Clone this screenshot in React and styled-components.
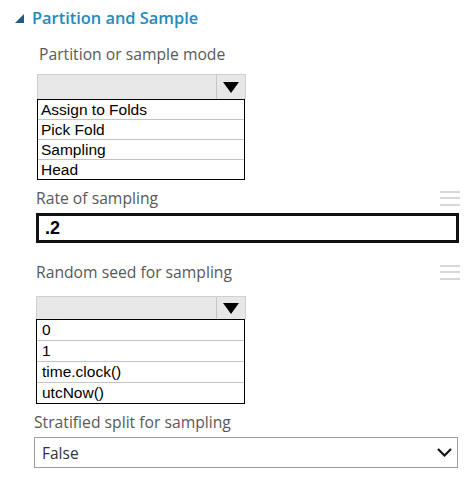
import React from 'react';
import styled, { createGlobalStyle } from 'styled-components';

const GlobalStyle = createGlobalStyle`
  html, body {
    margin: 0;
    padding: 0;
    background: #fff;
  }
`;

const Page = styled.div`
  width: 468px;
  height: 477px;
  box-sizing: border-box;
  padding: 6px 0 0 0;
  font-family: 'Open Sans', 'Noto Sans', sans-serif;
  overflow: hidden;
`;

const Title = styled.div`
  display: flex;
  align-items: center;
  height: 24px;
  padding-left: 15px;
  gap: 8px;
  font-size: 16.4px;
  font-weight: 600;
  color: #2489bd;
  line-height: 24px;

  svg {
    margin-top: 1px;
  }
`;

const Field = styled.div`
  margin-left: ${(p) => p.$indent}px;
  margin-top: ${(p) => p.$top}px;
  width: ${(p) => p.$width}px;
`;

const LabelRow = styled.div`
  display: flex;
  justify-content: space-between;
  align-items: center;
  height: 20px;
  margin-left: ${(p) => p.$shift || 0}px;
`;

const Label = styled.span`
  font-size: 15.7px;
  line-height: 20px;
  color: #585858;
`;

const Burger = styled.span`
  display: flex;
  flex-direction: column;
  gap: 4.5px;
  width: 20px;
  margin-right: -1px;

  i {
    display: block;
    height: 2px;
    background: #d8d8d8;
  }
`;

const Combo = styled.div`
  margin-top: ${(p) => p.$top}px;
  width: ${(p) => p.$width}px;
`;

const ComboHead = styled.div`
  display: flex;
  height: ${(p) => p.$height}px;
  box-sizing: border-box;
  border: 1px solid #cfcfcf;
  border-bottom: none;
  background-color: #e7e7e7;
  background-image: radial-gradient(#dcdcdc 0.6px, transparent 0.7px);
  background-size: 2px 2px;
`;

const ComboSpace = styled.div`
  flex: 1;
`;

const ComboArrow = styled.div`
  width: 28px;
  display: flex;
  align-items: center;
  justify-content: center;
  border-left: 1px solid #c6c6c6;
`;

const List = styled.ul`
  list-style: none;
  margin: 0;
  padding: 0;
  border: 1px solid #000;
  margin-right: 1px;
  background: #fff;
`;

const Item = styled.li`
  height: ${(p) => p.$height}px;
  line-height: ${(p) => p.$height}px;
  padding-left: ${(p) => p.$pad}px;
  font-family: 'Liberation Sans', Arial, sans-serif;
  font-size: 15.5px;
  color: #000;
  white-space: nowrap;

  & + & {
    border-top: 1px solid #c4c4c4;
  }
`;

const TextBox = styled.div`
  margin-top: 5px;
  height: 30px;
  box-sizing: border-box;
  border: 3px solid #111;
  padding-left: 6px;
  font-family: 'Liberation Sans', Arial, sans-serif;
  font-weight: 700;
  font-size: 18px;
  line-height: 24px;
  color: #000;
`;

const Select = styled.div`
  margin-top: 5px;
  height: 31px;
  box-sizing: border-box;
  border: 1px solid #9c9c9c;
  display: flex;
  align-items: center;
  justify-content: space-between;
  padding: 0 5px 0 7px;
  font-size: 15.5px;
  color: #333;
`;

const Triangle = () => (
  <svg width="9" height="9" viewBox="0 0 9 9">
    <polygon points="0,9 9,0 9,9" fill="#1f5a80" />
  </svg>
);

const DownArrow = () => (
  <svg width="16" height="11" viewBox="0 0 16 11">
    <polygon points="0,0 16,0 8,11" fill="#000" />
  </svg>
);

const Chevron = () => (
  <svg width="15" height="9" viewBox="0 0 15 9">
    <polyline points="1,1 7.5,7.5 14,1" fill="none" stroke="#111" strokeWidth="2.2" />
  </svg>
);

const Hamburger = () => (
  <Burger>
    <i />
    <i />
    <i />
  </Burger>
);

const ComboList = ({ items, top, width, headHeight, rowHeight, pad }) => (
  <Combo $top={top} $width={width}>
    <ComboHead $height={headHeight}>
      <ComboSpace />
      <ComboArrow>
        <DownArrow />
      </ComboArrow>
    </ComboHead>
    <List>
      {items.map((item) => (
        <Item key={item} $height={rowHeight} $pad={pad}>
          {item}
        </Item>
      ))}
    </List>
  </Combo>
);

const App = () => {
  return (
    <Page>
      <GlobalStyle />
      <Title>
        <Triangle />
        Partition and Sample
      </Title>

      <Field $indent={37} $top={14} $width={209}>
        <LabelRow $shift={2}>
          <Label>Partition or sample mode</Label>
        </LabelRow>
        <ComboList
          items={['Assign to Folds', 'Pick Fold', 'Sampling', 'Head']}
          top={10}
          width={209}
          headHeight={25}
          rowHeight={19}
          pad={3}
        />
      </Field>

      <Field $indent={36} $top={8} $width={423}>
        <LabelRow>
          <Label>Rate of sampling</Label>
          <Hamburger />
        </LabelRow>
        <TextBox>.2</TextBox>
      </Field>

      <Field $indent={36} $top={19} $width={423}>
        <LabelRow>
          <Label>Random seed for sampling</Label>
          <Hamburger />
        </LabelRow>
        <ComboList
          items={['0', '1', 'time.clock()', 'utcNow()']}
          top={14}
          width={210}
          headHeight={23}
          rowHeight={20}
          pad={5}
        />
      </Field>

      <Field $indent={34} $top={8} $width={424}>
        <LabelRow>
          <Label>Stratified split for sampling</Label>
        </LabelRow>
        <Select>
          False
          <Chevron />
        </Select>
      </Field>
    </Page>
  );
};

export default App;
